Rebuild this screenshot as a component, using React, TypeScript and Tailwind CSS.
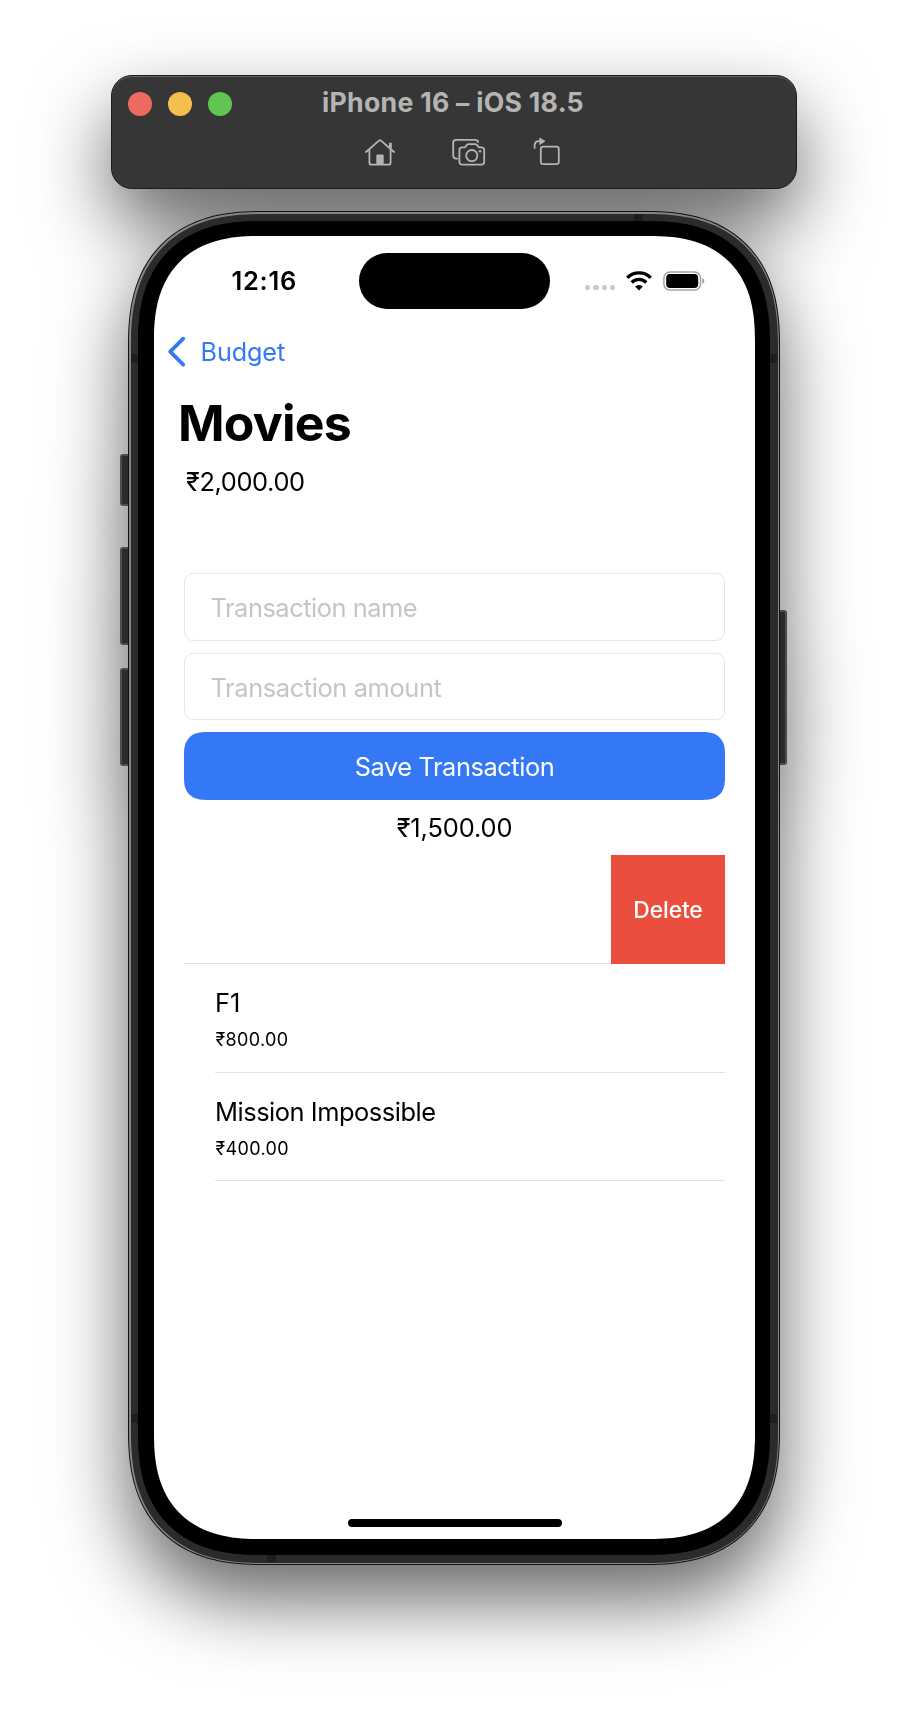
import type { ReactNode } from "react";

function HomeIcon() {
  return (
    <svg width="32" height="30" viewBox="0 0 32 30" fill="none" stroke="#b4b4b4" strokeWidth="1.8" strokeLinecap="round" strokeLinejoin="round">
      <path d="M2 15 L15 3.6 Q16 2.8 17 3.6 L30 15" />
      <path d="M5.4 12.6 V25.4 Q5.4 27.7 7.7 27.7 H24.3 Q26.6 27.7 26.6 25.4 V12.6" />
      <path d="M26.4 5.8 V11.4" strokeWidth="2.8" strokeLinecap="butt" />
      <path d="M12.3 28 V18.7 Q12.3 17.6 13.4 17.6 H18.6 Q19.7 17.6 19.7 18.7 V28 Z" fill="#b4b4b4" stroke="none" />
    </svg>
  );
}

function CameraIcon() {
  return (
    <svg width="34" height="30" viewBox="0 0 34 30" fill="none" stroke="#b4b4b4" strokeWidth="1.8" strokeLinecap="round" strokeLinejoin="round">
      <path d="M5.4 21.6 H4.2 Q1.2 21.6 1.2 18.6 V5.6 Q1.2 2.8 4.2 2.8 H23 Q25.6 2.8 26.2 5" />
      <path d="M10.2 10.4 H12.8 L15 7.8 Q15.6 7.1 16.6 7.1 H23.2 Q24.2 7.1 24.8 7.8 L27 10.4 H29.4 Q32.2 10.4 32.2 13.2 V24.8 Q32.2 27.6 29.4 27.6 H10.2 Q7.4 27.6 7.4 24.8 V13.2 Q7.4 10.4 10.2 10.4 Z" />
      <circle cx="19.8" cy="18.6" r="5.6" />
      <circle cx="28" cy="14.2" r="1.3" fill="#b4b4b4" stroke="none" />
    </svg>
  );
}

function RotateIcon() {
  return (
    <svg width="28" height="30" viewBox="0 0 28 30" fill="none" stroke="#b4b4b4" strokeWidth="1.8" strokeLinecap="round" strokeLinejoin="round">
      <rect x="7.8" y="9.6" width="18" height="17.6" rx="2.4" />
      <path d="M1.6 11 V8.6 Q1.6 4.2 6.2 4.2 H7.4" />
      <path d="M7 1.2 L12 4.2 L7 7.4 Z" fill="#b4b4b4" strokeWidth="0.8" />
    </svg>
  );
}

function WifiIcon() {
  return (
    <svg width="26" height="20" viewBox="0 0 26 20" fill="none" stroke="#000" strokeWidth="3.3">
      <path d="M1.3 6.9 A16.3 16.3 0 0 1 24.7 6.9" />
      <path d="M5.7 11.5 A10.2 10.2 0 0 1 20.3 11.5" />
      <path d="M13 19.6 L9.1 15.6 A5.6 5.6 0 0 1 16.9 15.6 Z" fill="#000" stroke="none" />
    </svg>
  );
}

function BatteryIcon() {
  return (
    <svg width="43" height="20" viewBox="0 0 43 20" fill="none">
      <rect x="0.9" y="0.9" width="36.6" height="18.2" rx="6" stroke="#a3a3a3" strokeWidth="1.5" />
      <rect x="3.2" y="3.1" width="32" height="13.8" rx="3.9" fill="#000" />
      <path d="M39.2 7 Q41.4 7.8 41.4 10 Q41.4 12.2 39.2 13 Z" fill="#a3a3a3" />
    </svg>
  );
}

function Toolbar() {
  return (
    <header className="relative z-10 h-[114px] w-[686px] rounded-[21px] border border-[#1c1c1c] bg-[#363636] shadow-[inset_0_1px_0_#656565]">
      <div className="grid h-[56px] grid-cols-[1fr_auto_1fr] items-center">
        <div className="flex gap-4 pl-4">
          <span className="size-6 rounded-full bg-[#ed6a5e]" />
          <span className="size-6 rounded-full bg-[#f4bf4f]" />
          <span className="size-6 rounded-full bg-[#61c554]" />
        </div>
        <h1 className="pr-[2px] pb-1 text-[26.7px] leading-[30px] font-bold tracking-[0.25px] whitespace-nowrap text-[#b4b4b4]">iPhone 16 – iOS 18.5</h1>
        <div />
      </div>
      <div className="flex pl-[252px] pt-[5px]">
        <div className="w-[88px]"><HomeIcon /></div>
        <div className="w-[81px]"><CameraIcon /></div>
        <RotateIcon />
      </div>
    </header>
  );
}

function Field({ label, size }: { label: string; size: string }) {
  return (
    <div className={`flex items-center rounded-[9px] border border-[#e6e6e6] pl-[25.5px] text-[25.4px] leading-[30px] text-[#c5c5c7] ${size}`}>{label}</div>
  );
}

function Transaction({ name, amount, size }: { name: ReactNode; amount: string; size: string }) {
  return (
    <li className={`ml-[31px] border-b border-[#e2e2e3] pt-6 ${size}`}>
      <div className="h-[30px] text-[25.4px] leading-[30px]">{name}</div>
      <div className="mt-3 h-5 pl-[0.5px] text-[18px] leading-5 tracking-[0.32px]">{amount}</div>
    </li>
  );
}

function Screen() {
  return (
    <main className="relative h-[1303px] w-[601px] overflow-hidden rounded-[105px] bg-white text-black [corner-shape:superellipse(1.3)]">
      <div className="flex h-[90px] items-center">
        <div className="w-[205px] pl-[77.5px] text-[25.5px] leading-[30px] font-semibold tracking-[0.7px]">12:16</div>
        <div className="h-[56px] w-[191px] rounded-full bg-black" />
        <div className="ml-[35px] mt-[13px] flex gap-[3px]">
          <span className="size-[5.3px] rounded-[2px] bg-[#cbcbcb]" />
          <span className="size-[5.3px] rounded-[2px] bg-[#cbcbcb]" />
          <span className="size-[5.3px] rounded-[2px] bg-[#cbcbcb]" />
          <span className="size-[5.3px] rounded-[2px] bg-[#cbcbcb]" />
        </div>
        <div className="ml-[11px]"><WifiIcon /></div>
        <div className="ml-[11px]"><BatteryIcon /></div>
      </div>

      <nav className="flex h-[52px] items-center text-[25.2px] leading-[30px] text-[#3478f6]">
        <svg className="ml-[12px]" width="20" height="32" viewBox="0 0 20 32" fill="none" stroke="#3478f6" strokeWidth="3.7" strokeLinecap="round" strokeLinejoin="round">
          <path d="M17.2 2.6 L4.2 15.6 L17.2 28.6" />
        </svg>
        <span className="ml-[14.5px] tracking-[-0.1px]">Budget</span>
      </nav>

      <h2 className="mt-[15px] pl-6 text-[50px] leading-[60px] font-bold tracking-[-0.8px]">Movies</h2>
      <div className="mt-[14px] pl-8 text-[25.4px] leading-[30px] tracking-[-0.37px]">₹2,000.00</div>

      <section className="mt-[76px] ml-[30px] w-[541px]">
        <Field label="Transaction name" size="h-[68px] pt-px tracking-[-0.46px]" />
        <Field label="Transaction amount" size="mt-3 h-[67px] pt-[2px] tracking-[-0.38px]" />
        <button className="mt-3 block h-[68px] w-full rounded-[22px] bg-[#3478f6] pt-px text-[25.4px] leading-[30px] tracking-[-0.43px] text-white [corner-shape:superellipse(1.3)]">Save Transaction</button>
        <div className="mt-[13px] text-center text-[25.4px] leading-[30px] tracking-[-0.1px]">₹1,500.00</div>

        <div className="mt-3 flex h-[109px] justify-end">
          <div className="grow border-b border-[#e2e2e3]" />
          <button className="w-[114px] bg-[#ea4e3d] pt-px text-[22.8px] leading-[30px] font-medium tracking-[-0.1px] text-white">Delete</button>
        </div>
        <ul>
          <Transaction name="F1" amount="₹800.00" size="h-[109px]" />
          <Transaction name={<span className="tracking-[-0.45px]">Mission Impossible</span>} amount="₹400.00" size="h-[108px]" />
        </ul>
      </section>

      <div className="mt-[338px] ml-[194px] h-[8px] w-[214px] rounded-full bg-black" />
    </main>
  );
}

function Phone() {
  return (
    <div className="relative mt-[22px]">
      <i className="absolute top-[243px] left-[-8px] h-[52px] w-[11px] rounded-[3px] border-2 border-[#4c4c4c] bg-[#2b2b2b]" />
      <i className="absolute top-[336px] left-[-8px] h-[98px] w-[11px] rounded-[3px] border-2 border-[#4c4c4c] bg-[#2b2b2b]" />
      <i className="absolute top-[457px] left-[-8px] h-[98px] w-[11px] rounded-[3px] border-2 border-[#4c4c4c] bg-[#2b2b2b]" />
      <i className="absolute top-[399px] right-[-7px] h-[155px] w-[10px] rounded-[3px] border-2 border-[#4c4c4c] bg-[#2b2b2b]" />
      <div className="relative h-[1354px] w-[652px] rounded-[133px] bg-[#111] p-px [corner-shape:superellipse(1.27)]">
        <div className="h-full rounded-[132px] bg-[#858585] p-[1.5px] [corner-shape:superellipse(1.27)]">
          <div className="h-full rounded-[130px] bg-[#2b2b2b] p-[7.5px] [corner-shape:superellipse(1.27)]">
            <div className="h-full rounded-[122px] bg-black pl-4 pt-[15px] [corner-shape:superellipse(1.28)]">
              <Screen />
            </div>
          </div>
        </div>
        <i className="absolute top-[3px] right-[137px] h-[7px] w-[9px] bg-[#1e1e1e]" />
        <i className="absolute bottom-[3px] left-[139px] h-[7px] w-[9px] bg-[#1e1e1e]" />
        <i className="absolute top-[143px] left-[3px] h-[9px] w-[7px] bg-[#1e1e1e]" />
        <i className="absolute top-[143px] right-[3px] h-[9px] w-[7px] bg-[#1e1e1e]" />
        <i className="absolute top-[1203px] left-[3px] h-[9px] w-[7px] bg-[#1e1e1e]" />
        <i className="absolute top-[1203px] right-[3px] h-[9px] w-[7px] bg-[#1e1e1e]" />
      </div>
    </div>
  );
}

export default function App() {
  return (
    <div className="h-[1716px] w-[908px] overflow-hidden bg-white font-['Inter','Noto_Sans',sans-serif]">
      <div className="flex flex-col items-center pt-[75px] [filter:drop-shadow(0_35px_38px_rgba(0,0,0,0.6))]">
        <Toolbar />
        <Phone />
      </div>
    </div>
  );
}
